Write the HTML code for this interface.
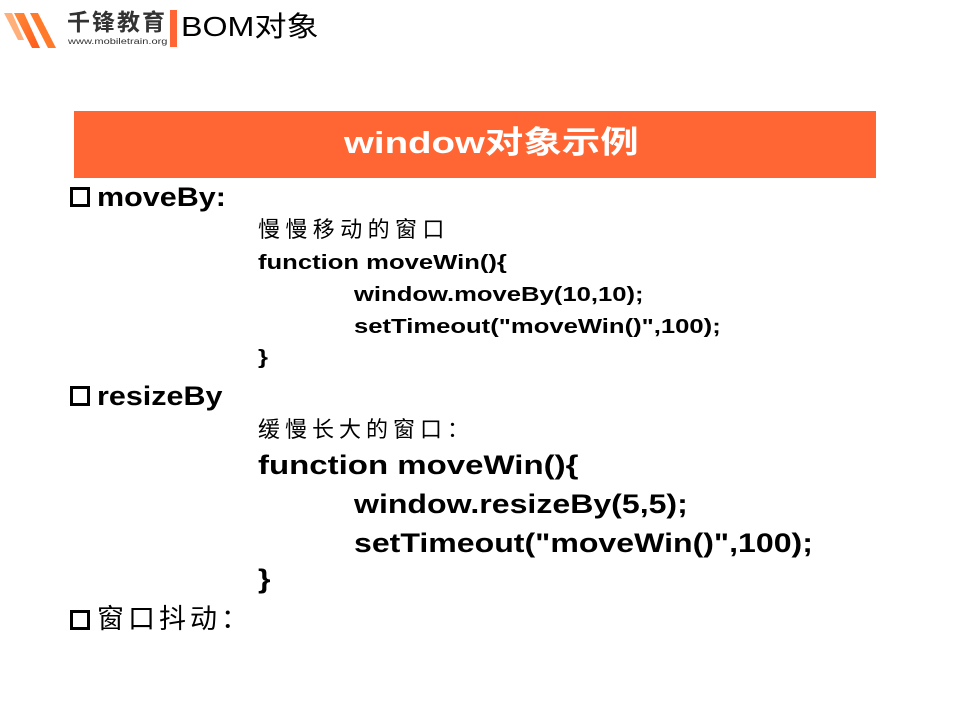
<!DOCTYPE html>
<html><head><meta charset="utf-8"><style>
body{margin:0;width:960px;height:720px;background:#fff;position:relative;overflow:hidden;font-family:"Liberation Sans","Noto Sans CJK SC",sans-serif;color:#000}
.a{position:absolute;white-space:nowrap;line-height:1;transform-origin:0 0}
.b{font-weight:bold}
.s{transform:scaleX(1.25)}
.t{transform:scaleX(1.21)}
.box{position:absolute;width:20px;height:20px;border:3px solid #000;box-sizing:border-box}
</style></head><body>
<svg class="a" style="left:4px;top:10px" width="60" height="40" viewBox="0 0 60 40">
<defs><linearGradient id="g" x1="0" y1="0" x2="1" y2="1"><stop offset="0" stop-color="#ff8a3a"/><stop offset="1" stop-color="#ff5a1a"/></linearGradient></defs>
<polygon points="0,3 8,3 20,30 14,30" fill="#ffb07a"/>
<polygon points="10,3 20,3 36,38 28,38" fill="url(#g)"/>
<polygon points="26,3 34,3 52,38 44,38" fill="#ff7a2a"/>
</svg>
<div class="a b" style="left:67px;top:11px;font-size:23px;color:#333;letter-spacing:2px">千锋教育</div>
<div class="a" style="left:68px;top:38px;font-size:8px;color:#333;transform:scaleX(1.38)">www.mobiletrain.org</div>
<div class="a" style="left:170px;top:10px;width:7px;height:37px;background:#ff6633"></div>
<div class="a" style="left:181px;top:13px;font-size:28px;transform:scaleX(1.15)">BOM对象</div>
<div class="a" style="left:74px;top:111px;width:802px;height:67px;background:#ff6633"></div>
<div class="a b" style="left:344px;top:127px;font-size:31px;color:#fff;transform:scaleX(1.24)">window对象示例</div>
<div class="box" style="left:70px;top:187px"></div>
<div class="a b" style="left:97px;top:184px;font-size:27px;transform:scaleX(1.13)">moveBy:</div>
<div class="a" style="left:258px;top:219px;font-size:22px;letter-spacing:5.4px">慢慢移动的窗口</div>
<div class="a b s" style="left:258px;top:253px;font-size:20.5px">function moveWin(){</div>
<div class="a b s" style="left:354px;top:285px;font-size:20.5px">window.moveBy(10,10);</div>
<div class="a b s" style="left:354px;top:317px;font-size:20.5px">setTimeout("moveWin()",100);</div>
<div class="a b s" style="left:258px;top:348px;font-size:20.5px">}</div>
<div class="box" style="left:70px;top:386px"></div>
<div class="a b" style="left:97px;top:383px;font-size:27px;transform:scaleX(1.13)">resizeBy</div>
<div class="a" style="left:258px;top:419px;font-size:22px;letter-spacing:5px">缓慢长大的窗口：</div>
<div class="a b t" style="left:258px;top:452px;font-size:26.5px;transform:scaleX(1.245)">function moveWin(){</div>
<div class="a b t" style="left:354px;top:491px;font-size:26.5px">window.resizeBy(5,5);</div>
<div class="a b t" style="left:354px;top:530px;font-size:26.5px">setTimeout("moveWin()",100);</div>
<div class="a b t" style="left:258px;top:566px;font-size:26.5px">}</div>
<div class="box" style="left:70px;top:610px"></div>
<div class="a" style="left:97px;top:606px;font-size:27px;letter-spacing:4px">窗口抖动：</div>
</body></html>
